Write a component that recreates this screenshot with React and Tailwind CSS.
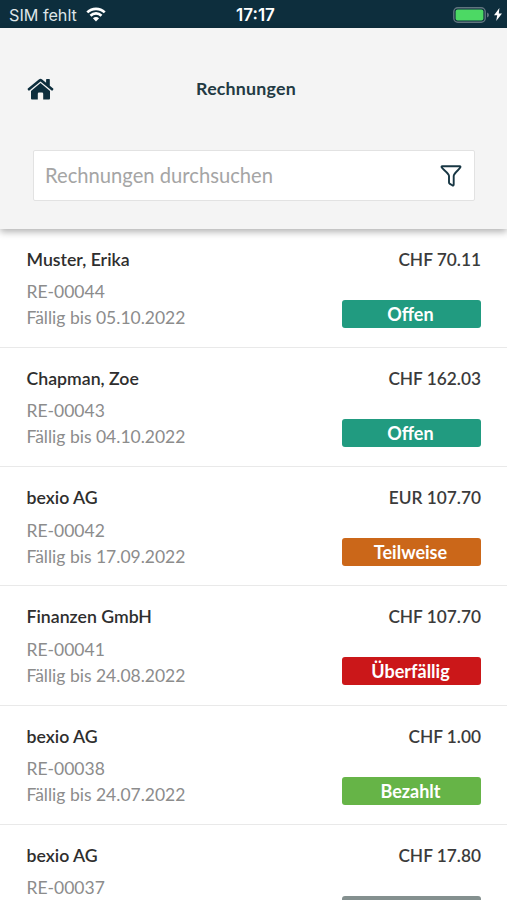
const invoices = [
  { name: 'Muster, Erika', number: 'RE-00044', due: '05.10.2022', amount: 'CHF 70.11', status: 'Offen' },
  { name: 'Chapman, Zoe', number: 'RE-00043', due: '04.10.2022', amount: 'CHF 162.03', status: 'Offen' },
  { name: 'bexio AG', number: 'RE-00042', due: '17.09.2022', amount: 'EUR 107.70', status: 'Teilweise' },
  { name: 'Finanzen GmbH', number: 'RE-00041', due: '24.08.2022', amount: 'CHF 107.70', status: 'Überfällig' },
  { name: 'bexio AG', number: 'RE-00038', due: '24.07.2022', amount: 'CHF 1.00', status: 'Bezahlt' },
  { name: 'bexio AG', number: 'RE-00037', due: '', amount: 'CHF 17.80', status: '' },
]

const statusColors = {
  Offen: 'bg-[#219b80]',
  Teilweise: 'bg-[#cb6719]',
  Überfällig: 'bg-[#cb1719]',
  Bezahlt: 'bg-[#66b447]',
}

function StatusBar() {
  return (
    <div className="h-7 shrink-0 grid grid-cols-3 items-center pl-[9px] pr-[5px] bg-[#0d2e3d] text-white font-['Inter','Liberation_Sans',sans-serif]">
      <div className="flex items-center gap-[9px] pt-px">
        <span className="text-[16.2px] leading-5 text-[#dfe5e8] whitespace-nowrap">SIM fehlt</span>
        <svg width="20" height="15" viewBox="0 0 20 15" fill="none" stroke="white" strokeWidth="2.7">
          <path d="M1.3 5.4a12.4 12.4 0 0 1 17.4 0" />
          <path d="M4.5 8.7a7.8 7.8 0 0 1 11 0" />
          <path d="M10 14.6 6.9 11.3a4.6 4.6 0 0 1 6.2 0z" fill="white" stroke="none" />
        </svg>
      </div>
      <span className="pt-px text-center text-[17px] leading-5 font-semibold">17:17</span>
      <div className="flex items-center justify-end gap-1 pt-px">
        <svg width="37" height="16" viewBox="0 0 37 16">
          <rect x="0.8" y="0.8" width="31.4" height="14.4" rx="4" fill="none" stroke="#61757f" strokeWidth="1.4" />
          <rect x="2.6" y="2.6" width="27.8" height="10.8" rx="2" fill="#4cd964" />
          <path d="M34 5.4q2 .8 2 2.6t-2 2.6z" fill="#61757f" />
        </svg>
        <svg width="8" height="13" viewBox="0 0 8 13" fill="white">
          <path d="M5.4 0 0 7.2h3.2L2.2 13 8 5.4H4.8z" />
        </svg>
      </div>
    </div>
  )
}

function HomeIcon() {
  return (
    <svg width="27" height="22" viewBox="0 0 27 22" fill="#0d2e3d">
      <path d="M13.5 5 4 12.9v7.6q0 .9.9.9h5.9v-5.6q0-1.2 1.2-1.2h3q1.2 0 1.2 1.2v5.6h5.9q.9 0 .9-.9v-7.6z" />
      <path d="M26.2 10.6 22.8 7.8V1.6q0-.6-.6-.6h-2.5q-.6 0-.6.6v3.1L15.2 1.4q-1.7-1.3-3.4 0L.8 10.6q-.4.4-.1.9l.8.9q.4.4.9.1L13.5 3.4l11.1 9.1q.5.3.9-.1l.8-.9q.3-.5-.1-.9z" />
    </svg>
  )
}

function FilterIcon() {
  return (
    <svg width="22" height="22" viewBox="0 0 22 22" fill="none" stroke="#183744" strokeWidth="1.9" strokeLinejoin="round">
      <path d="M2.2 1.3h17.6q.9 0 .6 1c-.6 1.8-6.7 5.8-6.7 8.8v8.3q0 1.6-1.4.9l-2.4-1.4q-.9-.5-.9-1.4v-6.4c0-3-6.8-7-7.4-8.8q-.3-1 .6-1z" />
    </svg>
  )
}

function InvoiceRow({ invoice }) {
  return (
    <li className="h-[119.3px] shrink-0 flex justify-between pl-[26.5px] pr-[26px] pt-[19px] border-b border-[#e9e9e9]">
      <div>
        <p className="text-[17.7px] leading-6 font-semibold text-[#2e2e2e]">{invoice.name}</p>
        <p className="mt-[7.5px] text-[17.5px] leading-[26px] text-[#8c8c8c]">{invoice.number}</p>
        {invoice.due && <p className="text-[17.5px] leading-[26px] text-[#8c8c8c]">Fällig bis {invoice.due}</p>}
      </div>
      <div className="w-[139px]">
        <p className="text-right text-[17.3px] leading-6 font-semibold text-[#3b3b3b]">{invoice.amount}</p>
        <div
          className={`mt-7 h-7 rounded-[3px] pr-0.5 text-center text-[18px] leading-7 font-bold text-white ${
            statusColors[invoice.status] || 'bg-[#84908f]'
          }`}
        >
          {invoice.status}
        </div>
      </div>
    </li>
  )
}

function App() {
  return (
    <div className="h-screen flex flex-col overflow-hidden bg-white font-['Lato',sans-serif]">
      <StatusBar />
      <header className="relative h-[200.5px] shrink-0 bg-[#f4f4f4] px-[27px] shadow-[0_3px_7px_rgba(0,0,0,0.3)]">
        <div className="h-[122px] grid grid-cols-3 items-center">
          <HomeIcon />
          <h1 className="pr-[15px] pb-px text-center text-[17.8px] font-bold tracking-[0.2px] text-[#233a43]">Rechnungen</h1>
        </div>
        <div className="ml-1.5 mr-[5px] h-[51px] flex items-center justify-between rounded-xs border border-[#e2e2e2] bg-white pl-[11px] pr-3">
          <span className="text-[20.2px] text-[#a5a5a5]">Rechnungen durchsuchen</span>
          <FilterIcon />
        </div>
      </header>
      <ul className="flex flex-col">
        {invoices.map((invoice) => (
          <InvoiceRow key={invoice.number} invoice={invoice} />
        ))}
      </ul>
    </div>
  )
}

export default App
